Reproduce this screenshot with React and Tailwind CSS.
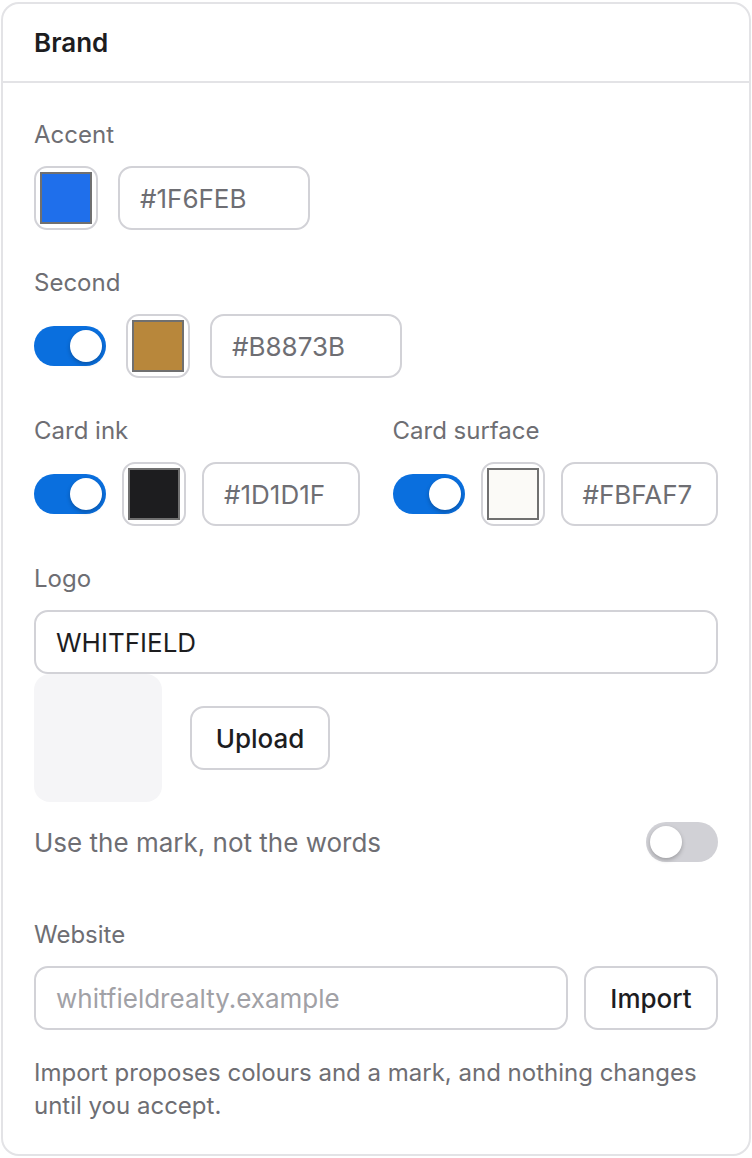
import React from "react";

function Toggle({ on }) {
  return (
    <div
      className={
        "relative w-[72px] h-[40px] rounded-full shrink-0 " +
        (on ? "bg-[#0a6fde]" : "bg-[#d1d1d6]")
      }
    >
      <div
        className={
          "absolute top-[4px] w-[32px] h-[32px] rounded-full bg-white shadow-[0_2px_4px_rgba(0,0,0,0.25)] " +
          (on ? "left-[36px]" : "left-[4px]")
        }
      />
    </div>
  );
}

function Swatch({ color }) {
  return (
    <div className="w-[64px] h-[64px] shrink-0 rounded-[13px] border-2 border-[#d2d2d7] p-[4px] bg-white">
      <div className="w-full h-full border-2 border-[#707070]" style={{ backgroundColor: color }} />
    </div>
  );
}

function Hex({ value, className = "" }) {
  return (
    <div
      className={
        "h-[64px] rounded-[14px] border-2 border-[#d2d2d7] px-[20px] flex items-center text-[26px] text-[#6e6e73] bg-white " +
        className
      }
    >
      {value}
    </div>
  );
}

function Label({ children }) {
  return <div className="text-[24px] leading-[32px] text-[#6e6e73] mb-[15px]">{children}</div>;
}

export default function App() {
  return (
    <div className="w-[752px] min-h-[1158px] bg-white pt-[2px] pl-[1px]" style={{ fontFamily: "Inter, 'Noto Sans', sans-serif" }}>
      <div className="w-[750px] border-2 border-[#e3e3e6] rounded-[18px] bg-white">
        <div className="h-[79px] border-b-2 border-[#e3e3e6] flex items-center pl-[31px] text-[26px] font-semibold text-[#1d1d1f]">
          Brand
        </div>
        <div className="pl-[31px] pr-[31px] pt-[36px] pb-[32px] flex flex-col">
          <div>
            <Label>Accent</Label>
            <div className="flex items-center gap-[20px]">
              <Swatch color="#1F6FEB" />
              <Hex value="#1F6FEB" className="w-[192px]" />
            </div>
          </div>

          <div className="mt-[37px]">
            <Label>Second</Label>
            <div className="flex items-center gap-[20px]">
              <Toggle on />
              <Swatch color="#B8873B" />
              <Hex value="#B8873B" className="w-[192px]" />
            </div>
          </div>

          <div className="mt-[37px] grid grid-cols-2 gap-[33px]">
            <div>
              <Label>Card ink</Label>
              <div className="flex items-center gap-[16px]">
                <Toggle on />
                <Swatch color="#1D1D1F" />
                <Hex value="#1D1D1F" className="flex-1 min-w-0" />
              </div>
            </div>
            <div>
              <Label>Card surface</Label>
              <div className="flex items-center gap-[16px]">
                <Toggle on />
                <Swatch color="#FBFAF7" />
                <Hex value="#FBFAF7" className="flex-1 min-w-0" />
              </div>
            </div>
          </div>

          <div className="mt-[37px]">
            <Label>Logo</Label>
            <div className="h-[64px] rounded-[14px] border-2 border-[#d2d2d7] px-[20px] flex items-center text-[26px] text-[#1d1d1f]">
              WHITFIELD
            </div>
            <div className="flex items-center gap-[28px]">
              <div className="w-[128px] h-[128px] rounded-[16px] bg-[#f5f5f7]" />
              <div className="w-[140px] h-[64px] rounded-[14px] border-2 border-[#d2d2d7] flex items-center justify-center text-[26px] font-medium text-[#1d1d1f]">
                Upload
              </div>
            </div>
          </div>

          <div className="mt-[20px] h-[40px] flex items-center justify-between">
            <div className="text-[26px] leading-[40px] pt-[2px] text-[#6e6e73]">Use the mark, not the words</div>
            <Toggle on={false} />
          </div>

          <div className="mt-[57px]">
            <Label>Website</Label>
            <div className="flex items-center gap-[16px]">
              <div className="flex-1 h-[64px] rounded-[14px] border-2 border-[#d2d2d7] px-[20px] flex items-center text-[26px] text-[#a1a1a6]">
                whitfieldrealty.example
              </div>
              <div className="w-[134px] h-[64px] rounded-[14px] border-2 border-[#d2d2d7] flex items-center justify-center text-[26px] font-medium text-[#1d1d1f]">
                Import
              </div>
            </div>
          </div>

          <p className="mt-[26px] text-[24px] leading-[33px] text-[#6e6e73]">
            Import proposes colours and a mark, and nothing changes until you accept.
          </p>
        </div>
      </div>
    </div>
  );
}
